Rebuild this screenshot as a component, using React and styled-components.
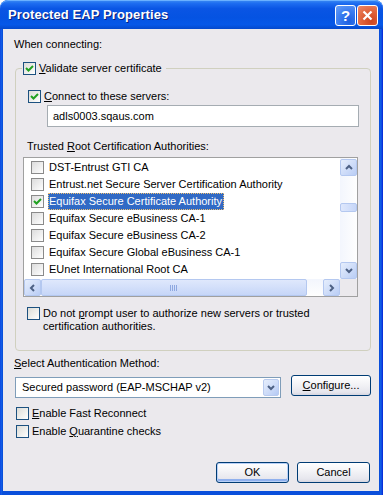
import React from 'react';
import styled, { createGlobalStyle, css } from 'styled-components';

const Global = createGlobalStyle`
  html, body { margin: 0; padding: 0; }
  body {
    width: 383px; height: 495px; overflow: hidden; background: #ffffff;
    font-family: "Liberation Sans", Arial, sans-serif; font-size: 11px; color: #000;
  }
  * { box-sizing: border-box; }
`;

const Window = styled.div`
  width: 383px; height: 495px;
  display: flex; flex-direction: column;
  background: linear-gradient(to right, #0831d9 0, #166aee 1px, #0a4fdb 2px, #0a4fdb 380px, #166aee 381px, #0831d9 382px);
  border-radius: 8px 8px 0 0;
  overflow: hidden;
`;

const TitleBar = styled.div`
  height: 29px; flex: none;
  display: flex; align-items: center; justify-content: space-between;
  padding: 0 5px 0 8px;
  background: linear-gradient(to bottom, #3c8cf3 0%, #1d6cf0 12%, #0a55e4 30%, #0553e2 60%, #0658e8 85%, #0449cc 100%);
  border-radius: 8px 8px 0 0;
  box-shadow: inset 0 1px 0 #6ab0ff;
`;

const Title = styled.div`
  font-family: "Liberation Sans", Arial, sans-serif;
  font-weight: bold; font-size: 13px; color: #fff;
  text-shadow: 1px 1px 0 #0a1f7a;
  letter-spacing: 0.1px;
  padding-bottom: 1px;
`;

const TitleButtons = styled.div`
  display: flex; gap: 1px; align-self: flex-start; margin-top: 5px;
`;

const CaptionButton = styled.div`
  width: 21px; height: 21px;
  border: 1px solid #fff; border-radius: 3px;
  display: flex; align-items: center; justify-content: center;
  color: #fff; font-weight: bold; font-size: 15px;
  font-family: "Liberation Sans", Arial, sans-serif;
  ${(p) => p.$close ? css`
    background: radial-gradient(circle at 70% 80%, #cc4520 0%, #e0643c 50%, #ec8a69 100%);
  ` : css`
    background: radial-gradient(circle at 70% 80%, #1c5fe0 0%, #3a7cf0 50%, #6aa0f6 100%);
  `}
`;

const Body = styled.div`
  flex: 1;
  margin: 0 4px 4px 3px;
  background: #ebe9ed;
  padding: 9px 8px 8px 11px;
  display: flex; flex-direction: column;
`;

const Text = styled.div`
  line-height: 13px; white-space: nowrap;
  margin: ${(p) => p.$m || '0'};
`;

const U = styled.span`text-decoration: underline;`;

const Group = styled.fieldset`
  margin: 11px 0 0 1px;
  padding: 0 0 17px 0;
  border: 1px solid #d0d0bf;
  border-radius: 4px;
  min-width: 0;
  display: flex; flex-direction: column;
`;

const Legend = styled.legend`
  margin-left: 6px;
  padding: 0 4px 0 1px;
  line-height: 13px;
`;

const Row = styled.label`
  display: flex; align-items: flex-start; gap: ${(p) => p.$gap ?? 3}px;
  line-height: 13px;
  margin: ${(p) => p.$m || '0'};
`;

const Box = styled.span`
  flex: none; width: 13px; height: 13px;
  display: inline-flex; align-items: center; justify-content: center;
  ${(p) => p.$flat ? css`
    border: 1px solid #8a8a8a;
    background: linear-gradient(135deg, #dcdcdc 0%, #f4f4f4 70%, #ffffff 100%);
  ` : css`
    border: 1px solid #1c5180;
    background: linear-gradient(135deg, #dcdcd7 0%, #f4f4f2 70%, #ffffff 100%);
  `}
`;

const Check = () => (
  <svg width="9" height="9" viewBox="0 0 9 9">
    <polyline points="1,4 3.5,6.5 8,2" fill="none" stroke="#21a121" strokeWidth="2" />
  </svg>
);

const CheckBox = ({ checked, flat }) => (
  <Box $flat={flat}>{checked && <Check />}</Box>
);

const TextBox = styled.div`
  height: 22px;
  margin: 2px 11px 0 31px;
  border: 1px solid #a5acb2;
  background: #fff;
  padding: 0 5px;
  display: flex; align-items: center;
  line-height: 13px;
`;

const List = styled.div`
  margin: 4px 12px 0 7px;
  height: 140px;
  border: 1px solid #a0a0a0;
  background: #fff;
  display: grid;
  grid-template-columns: 1fr 17px;
  grid-template-rows: 1fr 17px;
`;

const Items = styled.div`
  padding-top: 1px;
  overflow: hidden;
`;

const Item = styled.div`
  height: 17px; display: flex; align-items: center;
  padding-left: 7px; white-space: nowrap;
`;

const ItemLabel = styled.span`
  margin-left: 4px;
  padding: 1px 2px 2px 1px;
  line-height: 14px;
  ${(p) => p.$selected && css`
    background: #316ac5; color: #fff;
    outline: 1px dotted #f0c070; outline-offset: -1px;
  `}
`;

const VScroll = styled.div`
  display: flex; flex-direction: column;
  background: linear-gradient(to right, #f3f6fd, #fefefe);
  padding-top: 1px;
`;

const HScroll = styled.div`
  display: flex; align-items: stretch;
  background: linear-gradient(to bottom, #f3f6fd, #fefefe);
  padding-left: 0;
`;

const Corner = styled.div`background: #ebe9ed;`;

const ArrowBtn = styled.div`
  flex: none; width: 17px; height: 17px;
  border: 1px solid #b4c8f0; border-radius: 2px;
  background: linear-gradient(135deg, #e6eefc 0%, #cbdaf8 60%, #b9cdf5 100%);
  display: flex; align-items: center; justify-content: center;
`;

const Track = styled.div`
  flex: 1; display: flex;
  flex-direction: ${(p) => (p.$vertical ? 'column' : 'row')};
`;

const Thumb = styled.div`
  flex: none;
  border: 1px solid #b4c8f0; border-radius: 2px;
  display: flex; align-items: center; justify-content: center;
  ${(p) => p.$vertical ? css`
    height: 9px; margin-top: ${p.$offset}px;
    background: linear-gradient(to right, #dfe8fc, #c6d6f8);
  ` : css`
    width: ${p.$size}px;
    background: linear-gradient(to bottom, #dfe8fc, #c6d6f8);
  `}
`;

const Grip = () => (
  <svg width="8" height="6" viewBox="0 0 8 6">
    {[0, 2, 4, 6].map((x) => (
      <rect key={x} x={x} y="0" width="1" height="6" fill="#8ea8e0" />
    ))}
  </svg>
);

const Chevron = ({ dir }) => {
  const pts = {
    up: '1,5 4,2 7,5',
    down: '1,2 4,5 7,2',
    left: '5,1 2,4 5,7',
    right: '2,1 5,4 2,7',
  }[dir];
  return (
    <svg width="8" height="8" viewBox="0 0 8 8">
      <polyline points={pts} fill="none" stroke="#4d6185" strokeWidth="2" />
    </svg>
  );
};

const MethodRow = styled.div`
  display: flex; align-items: flex-start; justify-content: space-between;
  margin: 5px 0 0 1px;
`;

const Combo = styled.div`
  width: 266px; height: 21px; margin-top: 2px;
  border: 1px solid #7f9db9; background: #fff;
  display: flex; align-items: center;
  padding: 1px 1px 1px 6px;
`;

const ComboText = styled.span`flex: 1; line-height: 13px;`;

const ComboBtn = styled.div`
  width: 16px; height: 17px;
  border: 1px solid #b9cbef; border-radius: 2px;
  background: linear-gradient(135deg, #e6eefc 0%, #cbdaf8 60%, #b4c9f4 100%);
  display: flex; align-items: center; justify-content: center;
`;

const Button = styled.div`
  width: ${(p) => p.$w || 73}px; height: 21px;
  border: 1px solid #003c74; border-radius: 3px;
  background: linear-gradient(to bottom, #ffffff 0%, #f4f4f7 40%, #e6e6ed 85%, #d6d6e0 100%);
  display: flex; align-items: center; justify-content: center;
  line-height: 13px;
  ${(p) => p.$default && css`
    box-shadow: inset 0 0 0 1px #b8d0f7, inset 0 -2px 0 1px #8fb0ee;
  `}
`;

const Buttons = styled.div`
  margin-top: auto; margin-right: 1px;
  display: flex; justify-content: flex-end; gap: 8px;
`;

const certs = [
  { name: 'DST-Entrust GTI CA' },
  { name: 'Entrust.net Secure Server Certification Authority' },
  { name: 'Equifax Secure Certificate Authority', checked: true, selected: true },
  { name: 'Equifax Secure eBusiness CA-1' },
  { name: 'Equifax Secure eBusiness CA-2' },
  { name: 'Equifax Secure Global eBusiness CA-1' },
  { name: 'EUnet International Root CA' },
];

export default function App() {
  return (
    <>
      <Global />
      <Window>
        <TitleBar>
          <Title>Protected EAP Properties</Title>
          <TitleButtons>
            <CaptionButton>?</CaptionButton>
            <CaptionButton $close>
              <svg width="11" height="11" viewBox="0 0 11 11">
                <path d="M1.5 1.5 L9.5 9.5 M9.5 1.5 L1.5 9.5" stroke="#fff" strokeWidth="2.2" />
              </svg>
            </CaptionButton>
          </TitleButtons>
        </TitleBar>
        <Body>
          <Text>When connecting:</Text>
          <Group>
            <Legend>
              <Row>
                <CheckBox checked />
                <span><U>V</U>alidate server certificate</span>
              </Row>
            </Legend>
            <Row $m="15px 0 0 12px">
              <CheckBox checked />
              <span><U>C</U>onnect to these servers:</span>
            </Row>
            <TextBox>adls0003.sqaus.com</TextBox>
            <Text $m="13px 0 0 11px">Trusted <U>R</U>oot Certification Authorities:</Text>
            <List>
              <Items>
                {certs.map((c) => (
                  <Item key={c.name}>
                    <CheckBox flat checked={c.checked} />
                    <ItemLabel $selected={c.selected}>{c.name}</ItemLabel>
                  </Item>
                ))}
              </Items>
              <VScroll>
                <ArrowBtn><Chevron dir="up" /></ArrowBtn>
                <Track $vertical>
                  <Thumb $vertical $offset={27} />
                </Track>
                <ArrowBtn><Chevron dir="down" /></ArrowBtn>
              </VScroll>
              <HScroll>
                <ArrowBtn><Chevron dir="left" /></ArrowBtn>
                <Track>
                  <Thumb $size={266}><Grip /></Thumb>
                </Track>
                <ArrowBtn><Chevron dir="right" /></ArrowBtn>
              </HScroll>
              <Corner />
            </List>
            <Row $m="10px 0 0 11px">
              <CheckBox />
              <span>
                Do not <U>p</U>rompt user to authorize new servers or trusted<br />
                certification authorities.
              </span>
            </Row>
          </Group>
          <Text $m="6px 0 0 0"><U>S</U>elect Authentication Method:</Text>
          <MethodRow>
            <Combo>
              <ComboText>Secured password (EAP-MSCHAP v2)</ComboText>
              <ComboBtn><Chevron dir="down" /></ComboBtn>
            </Combo>
            <Button $w={80}><span><U>C</U>onfigure...</span></Button>
          </MethodRow>
          <Row $m="9px 0 0 2px">
            <CheckBox />
            <span><U>E</U>nable Fast Reconnect</span>
          </Row>
          <Row $m="5px 0 0 2px">
            <CheckBox />
            <span>Enable <U>Q</U>uarantine checks</span>
          </Row>
          <Buttons>
            <Button $default>OK</Button>
            <Button>Cancel</Button>
          </Buttons>
        </Body>
      </Window>
    </>
  );
}
